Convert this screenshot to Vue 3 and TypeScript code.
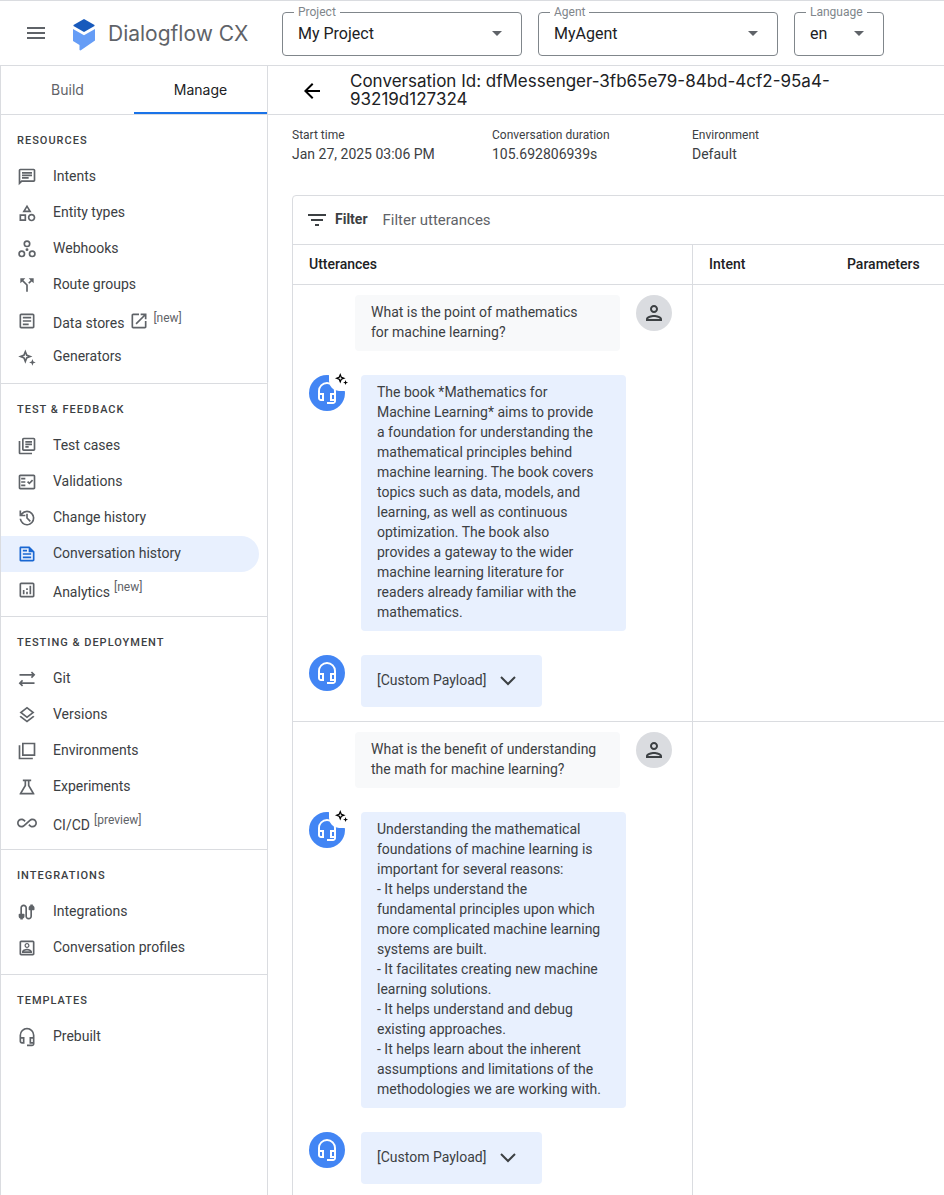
<script setup lang="ts">
import { ref } from 'vue'

interface NavItem {
  label: string
  icon: string
  tag?: string
  external?: boolean
  active?: boolean
}

interface NavSection {
  title: string
  items: NavItem[]
}

interface Turn {
  user: string
  bot: string
}

const icons: Record<string, string> = {
  intents: 'M4 4h16v12H5.17L4 17.17V4m0-2c-1.1 0-1.99.9-1.99 2L2 22l4-4h14c1.1 0 2-.9 2-2V4c0-1.1-.9-2-2-2H4zm2 10h8v2H6v-2zm0-3h12v2H6V9zm0-3h12v2H6V6z',
  entities: 'M12 2l-5.500 9h11L12 2zm0 3.840L13.930 9h-3.870L12 5.840zM17.500 13c-2.490 0-4.500 2.010-4.500 4.500s2.010 4.500 4.500 4.500 4.500-2.010 4.500-4.500-2.010-4.500-4.500-4.500zm0 7c-1.380 0-2.500-1.120-2.500-2.500s1.120-2.500 2.500-2.500 2.500 1.120 2.500 2.500-1.120 2.500-2.500 2.500zM3 21.500h8v-8H3v8zm2-6h4v4H5v-4z',
  webhooks: 'M12 1.500a4.250 4.250 0 1 0 0 8.500 4.250 4.250 0 0 0 0-8.500zm0 2a2.250 2.250 0 1 1 0 4.500 2.250 2.250 0 0 1 0-4.500zM5.750 13.500a4.250 4.250 0 1 0 0 8.500 4.250 4.250 0 0 0 0-8.500zm0 2a2.250 2.250 0 1 1 0 4.500 2.250 2.250 0 0 1 0-4.500zM18.250 13.500a4.250 4.250 0 1 0 0 8.500 4.250 4.250 0 0 0 0-8.500zm0 2a2.250 2.250 0 1 1 0 4.500 2.250 2.250 0 0 1 0-4.500zM12 11a1.750 1.750 0 1 0 0 3.500 1.750 1.750 0 0 0 0-3.500z',
  routes: 'M14 4l2.290 2.290-2.880 2.880 1.420 1.420 2.880-2.880L20 10V4h-6zm-4 0H4v6l2.290-2.290 4.710 4.700V20h2v-8.410l-5.290-5.300L10 4z',
  article: 'M19 5v14H5V5h14m0-2H5c-1.100 0-2 .9-2 2v14c0 1.100.9 2 2 2h14c1.100 0 2-.9 2-2V5c0-1.100-.9-2-2-2zm-5 14H7v-2h7v2zm3-4H7v-2h10v2zm0-4H7V7h10v2z',
  external: 'M19 19H5V5h7V3H5c-1.110 0-2 .9-2 2v14c0 1.100.89 2 2 2h14c1.100 0 2-.9 2-2v-7h-2v7zM14 3v2h3.590l-9.830 9.830 1.410 1.410L19 6.410V10h2V3h-7z',
  sparkle: 'M10 3l2.400 6.100 6.100 2.400-6.100 2.400L10 20l-2.400-6.100-6.100-2.400 6.100-2.400L10 3zm0 5.200l-.85 2.450-2.450.85 2.450.85.85 2.450.85-2.450 2.450-.85-2.450-.85L10 8.200zM18.500 14.500l1.100 2.900 2.900 1.100-2.900 1.100-1.100 2.900-1.100-2.900-2.900-1.100 2.900-1.100 1.100-2.900z',
  tests: 'M4 6H2v14c0 1.100.9 2 2 2h14v-2H4V6zm16-4H8c-1.100 0-2 .9-2 2v12c0 1.100.9 2 2 2h12c1.100 0 2-.9 2-2V4c0-1.100-.9-2-2-2zm0 14H8V4h12v12zM10 9h8v2h-8V9zm0 3h4v2h-4v-2zm0-6h8v2h-8V6z',
  validations: 'M20 3H4c-1.100 0-2 .9-2 2v14c0 1.100.9 2 2 2h16c1.100 0 2-.9 2-2V5c0-1.100-.9-2-2-2zm0 16H4V5h16v14zM19.410 10.420L17.990 9l-3.170 3.170-1.410-1.420L12 12.160 14.820 15l4.590-4.580zM5 7h5v2H5V7zm0 4h5v2H5v-2zm0 4h5v2H5v-2z',
  history: 'M12 3a9 9 0 0 0-7 3.350V3H3v7h7V8H6.260A7 7 0 1 1 5 13H3a9 9 0 1 0 9-10zm-1 4v5.400l4.300 4.300 1.400-1.400-3.700-3.700V7h-2z',
  conversation: 'M4 3h11l6 6v10c0 1.100-.9 2-2 2H4.500c-1 0-1.500-.9-1.500-2V5c0-1.100.4-2 1-2zm1 2v14h14v-9h-5V5H5zm2 2h5v2H7V7zm0 4h10v2H7v-2zm0 4h10v2H7v-2z',
  analytics: 'M19 3H5c-1.100 0-2 .9-2 2v14c0 1.100.9 2 2 2h14c1.100 0 2-.9 2-2V5c0-1.100-.9-2-2-2zm0 16H5V5h14v14zM7 12h2v5H7v-5zm8-5h2v10h-2V7zm-4 7h2v3h-2v-3zm0-4h2v2h-2v-2z',
  git: 'M18 3l4 4-4 4-1.400-1.400L18.200 8H3V6h15.200l-1.600-1.600L18 3zM6 13l1.400 1.400L5.800 16H21v2H5.800l1.600 1.600L6 21l-4-4 4-4z',
  versions: 'M11.990 18.540l-7.370-5.730L3 14.070l9 7 9-7-1.630-1.270-7.380 5.740zM12 16l7.360-5.730L21 9l-9-7-9 7 1.630 1.270L12 16zm0-11.470L17.740 9 12 13.470 6.260 9 12 4.530z',
  environments: 'M4 5H2v17h17v-2H4V5zM6 2v16h16V2H6zm14 14H8V4h12v12z',
  experiments: 'M7 3h10v2h-2v5l6 10v1H3v-1l6-10V5H7V3zm4 2v5.600L6 19h12l-5-8.400V5h-2z',
  infinity: 'M18.600 6.620c-1.440 0-2.800.56-3.770 1.530L7.800 14.390c-.64.64-1.490.99-2.400.99-1.870 0-3.390-1.510-3.390-3.380S3.530 8.620 5.400 8.620c.91 0 1.760.35 2.440 1.030l1.130 1 1.510-1.340L9.220 8.200C8.200 7.180 6.840 6.620 5.400 6.620 2.420 6.620 0 9.040 0 12s2.420 5.380 5.400 5.380c1.440 0 2.800-.56 3.770-1.530l7.030-6.240c.64-.64 1.490-.99 2.400-.99 1.870 0 3.390 1.510 3.390 3.380s-1.520 3.380-3.390 3.380c-.9 0-1.760-.35-2.440-1.030l-1.140-1.010-1.510 1.340 1.270 1.120c1.020 1.010 2.370 1.570 3.820 1.570 2.980 0 5.400-2.410 5.400-5.380s-2.420-5.370-5.400-5.370z',
  cable: 'M4 21v-1.200C2.800 19.400 2 18.300 2 17v-2c0-.6.400-1 1-1h1V7c0-2.200 1.800-4 4-4s4 1.800 4 4v10c0 1.100.9 2 2 2s2-.9 2-2v-7h-1c-.6 0-1-.4-1-1V7c0-1.300.8-2.400 2-2.800V3h3v1.200c1.200.4 2 1.500 2 2.800v2c0 .6-.4 1-1 1h-2v7c0 2.200-1.800 4-4 4s-4-1.800-4-4V7c0-1.100-.9-2-2-2s-2 .9-2 2v7h2c.6 0 1 .4 1 1v2c0 1.300-.8 2.400-2 2.800V21H4z',
  profile: 'M19 3H5c-1.100 0-2 .9-2 2v14c0 1.100.9 2 2 2h14c1.100 0 2-.9 2-2V5c0-1.100-.9-2-2-2zm0 16H5V5h14v14zM12 12c1.650 0 3-1.350 3-3s-1.350-3-3-3-3 1.350-3 3 1.350 3 3 3zm0-4.500c.83 0 1.500.67 1.500 1.500s-.67 1.500-1.500 1.500-1.500-.67-1.500-1.500.67-1.500 1.500-1.500zM6 16.470V18h12v-1.530c0-2.500-3.970-3.580-6-3.580s-6 1.070-6 3.580zM8.310 16c.69-.56 2.380-1.120 3.690-1.120s3.010.56 3.690 1.120H8.310z',
  headset: 'M12 1a9 9 0 0 0-9 9v7c0 1.660 1.340 3 3 3h3v-8H5v-2c0-3.870 3.130-7 7-7s7 3.130 7 7v2h-4v8h4v1h-7v2h6c1.660 0 3-1.340 3-3V10a9 9 0 0 0-9-9zM7 14v4H6c-.55 0-1-.45-1-1v-3h2zm12 4h-2v-4h2v4z',
  person: 'M12 6c1.100 0 2 .9 2 2s-.9 2-2 2-2-.9-2-2 .9-2 2-2m0 10c2.700 0 5.800 1.290 6 2H6c.23-.72 3.310-2 6-2m0-12C9.790 4 8 5.790 8 8s1.790 4 4 4 4-1.790 4-4-1.790-4-4-4zm0 10c-2.670 0-8 1.340-8 4v2h16v-2c0-2.660-5.330-4-8-4z',
}

const sections: NavSection[] = [
  {
    title: 'RESOURCES',
    items: [
      { label: 'Intents', icon: 'intents' },
      { label: 'Entity types', icon: 'entities' },
      { label: 'Webhooks', icon: 'webhooks' },
      { label: 'Route groups', icon: 'routes' },
      { label: 'Data stores', icon: 'article', external: true, tag: '[new]' },
      { label: 'Generators', icon: 'sparkle' },
    ],
  },
  {
    title: 'TEST & FEEDBACK',
    items: [
      { label: 'Test cases', icon: 'tests' },
      { label: 'Validations', icon: 'validations' },
      { label: 'Change history', icon: 'history' },
      { label: 'Conversation history', icon: 'conversation', active: true },
      { label: 'Analytics', icon: 'analytics', tag: '[new]' },
    ],
  },
  {
    title: 'TESTING & DEPLOYMENT',
    items: [
      { label: 'Git', icon: 'git' },
      { label: 'Versions', icon: 'versions' },
      { label: 'Environments', icon: 'environments' },
      { label: 'Experiments', icon: 'experiments' },
      { label: 'CI/CD', icon: 'infinity', tag: '[preview]' },
    ],
  },
  {
    title: 'INTEGRATIONS',
    items: [
      { label: 'Integrations', icon: 'cable' },
      { label: 'Conversation profiles', icon: 'profile' },
    ],
  },
  { title: 'TEMPLATES', items: [{ label: 'Prebuilt', icon: 'headset' }] },
]

const pickers = [
  { id: 'project', label: 'Project', value: 'My Project', compact: false },
  { id: 'agent', label: 'Agent', value: 'MyAgent', compact: false },
  { id: 'language', label: 'Language', value: 'en', compact: true },
]

const details = [
  { term: 'Start time', value: 'Jan 27, 2025 03:06 PM' },
  { term: 'Conversation duration', value: '105.692806939s' },
  { term: 'Environment', value: 'Default' },
]

const turns: Turn[] = [
  {
    user: 'What is the point of mathematics\nfor machine learning?',
    bot: [
      'The book *Mathematics for',
      'Machine Learning* aims to provide',
      'a foundation for understanding the',
      'mathematical principles behind',
      'machine learning. The book covers',
      'topics such as data, models, and',
      'learning, as well as continuous',
      'optimization. The book also',
      'provides a gateway to the wider',
      'machine learning literature for',
      'readers already familiar with the',
      'mathematics.',
    ].join('\n'),
  },
  {
    user: 'What is the benefit of understanding\nthe math for machine learning?',
    bot: [
      'Understanding the mathematical',
      'foundations of machine learning is',
      'important for several reasons:',
      '- It helps understand the',
      'fundamental principles upon which',
      'more complicated machine learning',
      'systems are built.',
      '- It facilitates creating new machine',
      'learning solutions.',
      '- It helps understand and debug',
      'existing approaches.',
      '- It helps learn about the inherent',
      'assumptions and limitations of the',
      'methodologies we are working with.',
    ].join('\n'),
  },
]

const filterText = ref('')
</script>

<template>
  <div class="app">
    <header class="topbar">
      <button class="icon-button menu" type="button" aria-label="Main menu">
        <svg width="24" height="24" viewBox="0 0 24 24"><path d="M3 18h18v-2H3v2zm0-5h18v-2H3v2zm0-7v2h18V6H3z" /></svg>
      </button>
      <a class="brand" href="#">
        <svg class="logo" width="24" height="32" viewBox="0 0 24 32" aria-hidden="true">
          <path fill="#185abc" d="M12 0l10.500 6v1L12 13 1.500 7V6z" />
          <path fill="#669df6" d="M1 10l11 6.300L23 10v11.500L8.500 31.500 7.500 31v-5L1 22z" />
        </svg>
        <span class="brand-name">Dialogflow CX</span>
      </a>
      <div class="pickers">
        <div v-for="p in pickers" :key="p.id" class="picker" :class="{ compact: p.compact }">
          <label :for="p.id">{{ p.label }}</label>
          <select :id="p.id"><option>{{ p.value }}</option></select>
          <svg class="caret" width="10" height="5" viewBox="0 0 10 5" aria-hidden="true"><path d="M0 0h10L5 5z" /></svg>
        </div>
      </div>
    </header>

    <div class="body">
      <aside class="sidebar">
        <div class="tabs" role="tablist">
          <button type="button" role="tab" aria-selected="false">Build</button>
          <button type="button" role="tab" aria-selected="true" class="selected">Manage</button>
        </div>
        <nav>
          <section v-for="s in sections" :key="s.title">
            <h2>{{ s.title }}</h2>
            <a v-for="item in s.items" :key="item.label" href="#" :class="{ active: item.active }">
              <svg class="nav-icon" width="20" height="20" viewBox="0 0 24 24" aria-hidden="true"><path :d="icons[item.icon]" /></svg>
              <span class="nav-label" :class="{ tagged: item.tag }">{{ item.label }}</span>
              <svg v-if="item.external" class="external" width="20" height="20" viewBox="0 0 24 24" aria-hidden="true"><path :d="icons.external" /></svg>
              <span v-if="item.tag" class="tag">{{ item.tag }}</span>
            </a>
          </section>
        </nav>
      </aside>

      <main>
        <div class="title-bar">
          <button class="icon-button back" type="button" aria-label="Back">
            <svg width="24" height="24" viewBox="0 0 24 24"><path d="M20 11H7.830l5.590-5.590L12 4l-8 8 8 8 1.410-1.410L7.830 13H20v-2z" /></svg>
          </button>
          <h1>Conversation Id: dfMessenger-3fb65e79-84bd-4cf2-95a4-93219d127324</h1>
        </div>

        <dl class="details">
          <div v-for="d in details" :key="d.term">
            <dt>{{ d.term }}</dt>
            <dd>{{ d.value }}</dd>
          </div>
        </dl>

        <div class="card">
          <div class="filter">
            <svg width="18" height="12" viewBox="0 0 18 12" aria-hidden="true"><path d="M7 12h4v-2H7v2zM0 0v2h18V0H0zm3 7h12V5H3v2z" /></svg>
            <label for="filter">Filter</label>
            <input id="filter" v-model="filterText" type="text" placeholder="Filter utterances">
          </div>
          <table>
            <colgroup>
              <col class="col-utterances">
              <col class="col-intent">
              <col>
            </colgroup>
            <thead>
              <tr><th>Utterances</th><th>Intent</th><th>Parameters</th></tr>
            </thead>
            <tbody>
              <tr v-for="(turn, i) in turns" :key="i">
                <td>
                  <div class="thread">
                    <div class="message user">
                      <p class="bubble">{{ turn.user }}</p>
                      <span class="avatar person"><svg width="24" height="24" viewBox="0 0 24 24"><path :d="icons.person" /></svg></span>
                    </div>
                    <div class="message">
                      <span class="avatar bot">
                        <svg width="24" height="24" viewBox="0 0 24 24"><path :d="icons.headset" /></svg>
                        <span class="generated"><svg width="15" height="15" viewBox="0 0 24 24"><path :d="icons.sparkle" /></svg></span>
                      </span>
                      <p class="bubble">{{ turn.bot }}</p>
                    </div>
                    <div class="message">
                      <span class="avatar bot"><svg width="24" height="24" viewBox="0 0 24 24"><path :d="icons.headset" /></svg></span>
                      <button class="payload" type="button">
                        [Custom Payload]
                        <svg width="16" height="10" viewBox="0 0 16 10" aria-hidden="true"><path d="M1 1l7 7 7-7" /></svg>
                      </button>
                    </div>
                  </div>
                </td>
                <td></td>
                <td></td>
              </tr>
            </tbody>
          </table>
        </div>
      </main>
    </div>
  </div>
</template>

<style>
body {
  margin: 0;
  background: #fff;
}
</style>

<style scoped>
.app {
  display: flex;
  flex-direction: column;
  height: 100vh;
  overflow: hidden;
  font-family: Roboto, "Liberation Sans", sans-serif;
  font-size: 14px;
  line-height: 20px;
  color: #3c4043;
}

.app *,
.app *::before {
  box-sizing: border-box;
}

button,
select,
input {
  margin: 0;
  padding: 0;
  border: 0;
  background: none;
  font: inherit;
  color: inherit;
}

a {
  color: inherit;
  text-decoration: none;
}

svg {
  display: block;
  flex: none;
  fill: currentColor;
}

.topbar {
  display: flex;
  flex: none;
  align-items: center;
  height: 66px;
  padding-left: 24px;
  border-top: 1px solid #dadce0;
  border-bottom: 1px solid #dadce0;
}

.icon-button {
  display: flex;
  flex: none;
}

.menu {
  color: #5f6368;
}

.brand {
  display: flex;
  flex: none;
  align-items: center;
  gap: 12px;
  width: 210px;
  margin-left: 24px;
  padding-top: 2px;
}

.logo {
  margin-top: 2px;
}

.brand-name {
  font-family: "Google Sans", Inter, Roboto, sans-serif;
  font-size: 21px;
  line-height: 28px;
  white-space: nowrap;
  color: #5f6368;
}

.pickers {
  display: flex;
  gap: 16px;
  padding-top: 2px;
}

.picker {
  position: relative;
  width: 240px;
  height: 44px;
  border: 1px solid #80868b;
  border-radius: 4px;
}

.picker.compact {
  width: 90px;
}

.picker label {
  position: absolute;
  top: -9px;
  left: 11px;
  padding: 0 4px;
  background: #fff;
  font-size: 12px;
  line-height: 16px;
  color: #80868b;
}

.picker select {
  width: 100%;
  height: 100%;
  padding: 0 16px 0 15px;
  appearance: none;
  font-size: 16px;
  color: #202124;
}

.caret {
  position: absolute;
  top: 18px;
  right: 19px;
  color: #5f6368;
  pointer-events: none;
}

.body {
  display: flex;
  flex: 1;
  min-height: 0;
}

.sidebar {
  flex: none;
  width: 268px;
  border-left: 1px solid #dadce0;
  border-right: 1px solid #dadce0;
}

.tabs {
  display: grid;
  grid-template-columns: 1fr 1fr;
  height: 49px;
  border-bottom: 1px solid #dadce0;
}

.tabs button {
  padding-top: 2px;
  border-bottom: 2px solid transparent;
  font-family: "Google Sans", Inter, Roboto, sans-serif;
  color: #5f6368;
}

.tabs .selected {
  border-color: #1a73e8;
  color: #202124;
}

nav section {
  padding-bottom: 8px;
  border-bottom: 1px solid #dadce0;
}

nav section:last-child {
  border-bottom: 0;
}

nav h2 {
  margin: 0;
  padding: 18px 16px 10px;
  font-size: 11px;
  line-height: 16px;
  font-weight: 500;
  letter-spacing: 1px;
}

nav a {
  display: flex;
  align-items: center;
  height: 36px;
  margin-right: 8px;
  padding-left: 16px;
  border-radius: 0 18px 18px 0;
}

nav a.active {
  background: #e8f0fe;
}

.nav-icon {
  margin-right: 16px;
  color: #5f6368;
}

.active .nav-icon {
  color: #1967d2;
}

.nav-label {
  padding-bottom: 2px;
}

.nav-label.tagged {
  padding-top: 4px;
  padding-bottom: 0;
}

.external {
  margin-left: 5px;
  color: #5f6368;
}

.tag {
  margin-left: 4px;
  padding-bottom: 6px;
  font-size: 12px;
  line-height: 16px;
  color: #5f6368;
}

main {
  flex: 1;
  min-width: 0;
  overflow: hidden;
}

.title-bar {
  display: flex;
  align-items: center;
  height: 49px;
  padding: 0 24px 0 32px;
  border-bottom: 1px solid #dadce0;
}

.back {
  padding-top: 2px;
  color: #000;
}

h1 {
  margin: 0 0 0 26px;
  font-family: "Google Sans", Inter, Roboto, sans-serif;
  font-size: 17px;
  line-height: 18px;
  font-weight: 400;
  color: #202124;
}

.details {
  display: flex;
  margin: 0;
  padding: 12px 24px 31px;
}

.details > div {
  width: 200px;
}

dt {
  font-size: 12px;
  line-height: 16px;
}

dd {
  margin: 1px 0 0;
}

.card {
  width: 1100px;
  margin-left: 24px;
  border: 1px solid #dadce0;
  border-radius: 4px;
}

.filter {
  display: flex;
  align-items: center;
  height: 48px;
  padding-left: 15px;
}

.filter label {
  margin-left: 9px;
  padding-bottom: 2px;
  font-weight: 700;
}

.filter input {
  flex: 1;
  margin-left: 15px;
  outline: 0;
  font-size: 15px;
}

.filter input::placeholder {
  color: #5f6368;
  opacity: 1;
}

table {
  width: 100%;
  table-layout: fixed;
  border-spacing: 0;
}

.col-utterances {
  width: 400px;
}

.col-intent {
  width: 138px;
}

th {
  height: 41px;
  padding: 0 16px 2px;
  border-top: 1px solid #dadce0;
  border-bottom: 1px solid #dadce0;
  text-align: left;
  font-weight: 500;
  color: #202124;
}

th:first-child,
td:first-child {
  border-right: 1px solid #dadce0;
}

td {
  padding: 10px 16px 14px;
  border-bottom: 1px solid #dadce0;
  vertical-align: top;
}

.thread {
  display: flex;
  flex-direction: column;
  gap: 24px;
}

.message {
  display: flex;
  align-items: flex-start;
  gap: 16px;
}

.message.user {
  justify-content: flex-end;
  padding-right: 4px;
}

.bubble {
  width: 265px;
  margin: 0;
  padding: 7px 16px 9px;
  border-radius: 4px;
  background: #e8f0fe;
  white-space: pre-line;
}

.user .bubble {
  background: #f8f9fa;
}

.avatar {
  position: relative;
  display: flex;
  flex: none;
  align-items: center;
  justify-content: center;
  width: 36px;
  height: 36px;
  border-radius: 50%;
}

.person {
  background: #dadce0;
}

.bot {
  background: #4285f4;
  color: #fff;
}

.generated {
  position: absolute;
  top: -4px;
  right: -4px;
  display: flex;
  justify-content: flex-end;
  width: 20px;
  height: 20px;
  border-radius: 0 0 0 10px;
  background: #fff;
  color: #000;
}

.payload {
  display: flex;
  align-items: center;
  gap: 14px;
  height: 52px;
  padding: 0 26px 2px 16px;
  border-radius: 4px;
  background: #e8f0fe;
}

.payload svg {
  margin-top: 2px;
  fill: none;
  stroke: currentColor;
  stroke-width: 2;
}
</style>
